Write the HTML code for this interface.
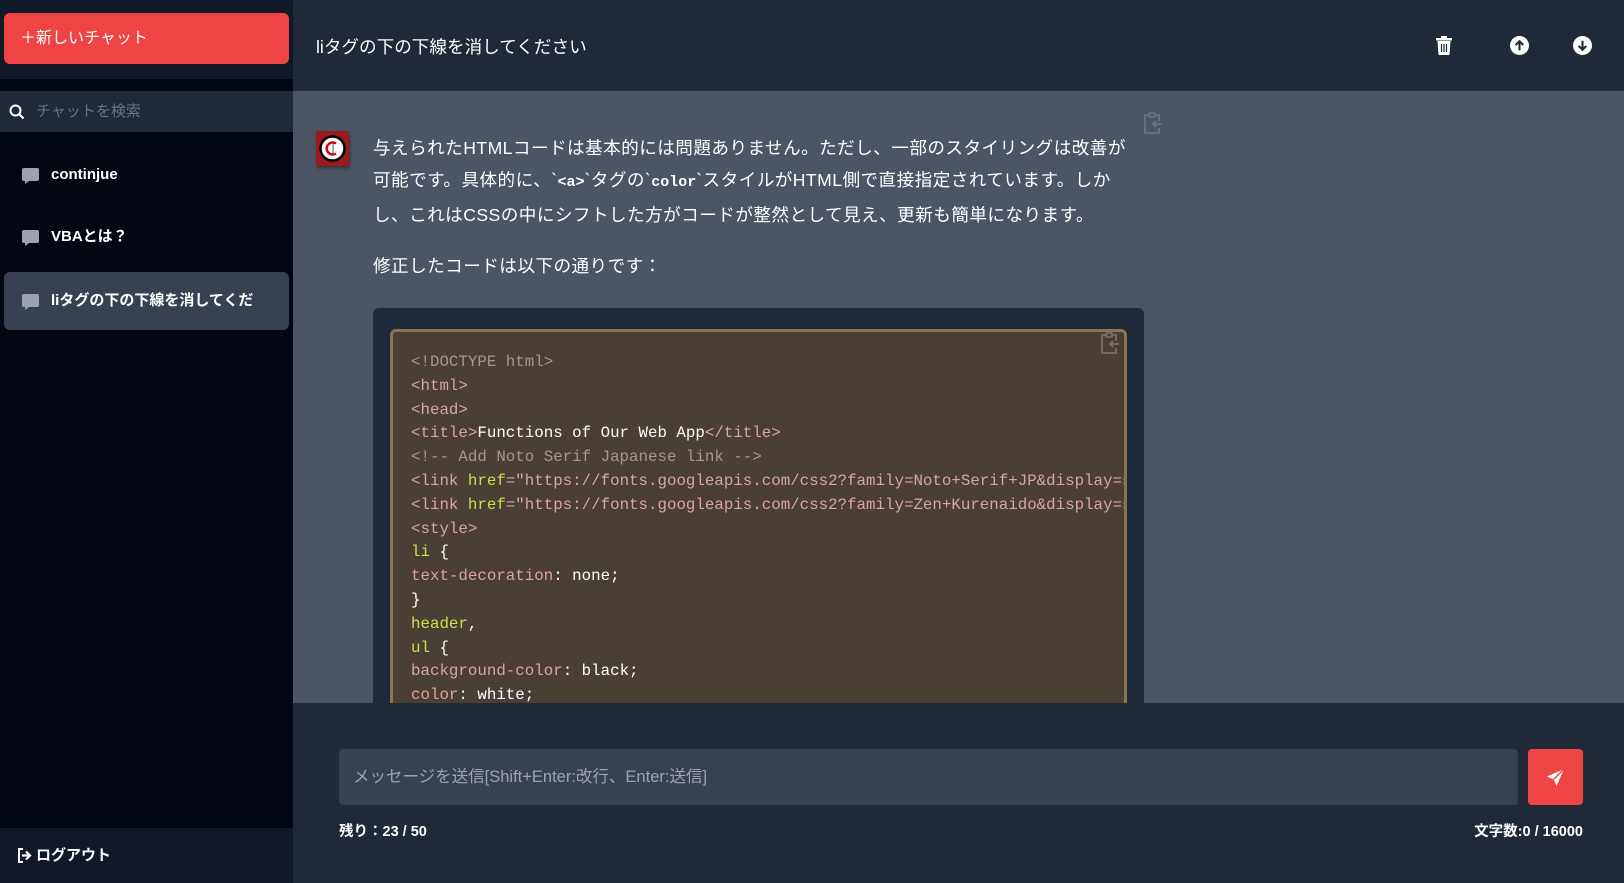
<!DOCTYPE html>
<html><head><meta charset="utf-8"><style>
*{margin:0;padding:0;box-sizing:border-box}
body{width:1624px;height:883px;overflow:hidden;font-family:"Liberation Sans","Noto Sans CJK JP",sans-serif;background:#4b5563;position:relative;color:#fff}
.sb{position:absolute;left:0;top:0;width:293px;height:883px;background:#030712}
.sbtop{position:absolute;left:0;top:0;width:293px;height:79px;background:#111827}
.btn{position:absolute;left:4px;top:13px;width:285px;height:51px;background:#ef4444;border-radius:6px;font-size:16px;line-height:51px;padding-left:16px;color:#fff}
.search{position:absolute;left:0;top:91px;width:293px;height:41px;background:#1f2937;color:#6b7280;font-size:15px;line-height:41px;padding-left:36px}
.item{position:absolute;left:4px;width:285px;height:58px;border-radius:6px;font-size:15px;line-height:58px;padding-left:47px;color:#fff;font-weight:bold}
.item svg{position:absolute;left:18px;top:22px}
.logout{position:absolute;left:0;top:828px;width:293px;height:55px;background:#111827;font-size:15px;line-height:55px;padding-left:36px;font-weight:bold}
.hdr{position:absolute;left:293px;top:0;width:1331px;height:91px;background:#1f2937}
.title{position:absolute;left:23px;top:34px;font-size:17.6px}
.msg{position:absolute;left:373px;top:132px;width:800px;font-size:17.6px;line-height:32px;color:#fff;white-space:nowrap;letter-spacing:0.45px}
.code1{position:absolute;left:373px;top:308px;width:771px;height:420px;background:#1f2937;border-radius:6px}
.code2{position:absolute;left:390px;top:329px;width:737px;height:420px;background:#4a3f35;border:3px solid #8b7355;border-radius:6px;overflow:hidden}
pre{font-family:"Liberation Mono",monospace;font-size:15.8px;line-height:23.8px;color:#fff;padding:19px 0 0 18px;white-space:pre}
.t{color:#dca3a8}.a{color:#c6e24a}.c{color:#a8978a}.s{color:#dca3a8}
.bot{position:absolute;left:293px;top:703px;width:1331px;height:180px;background:#1f2937}
.inp{position:absolute;left:339px;top:749px;width:1179px;height:56px;background:#374151;border-radius:4px;color:#9ca3af;font-size:16.5px;line-height:56px;padding-left:14px}
.send{position:absolute;left:1528px;top:749px;width:55px;height:56px;background:#ef4444;border-radius:4px}
.small{position:absolute;top:820px;font-size:14.5px;font-weight:bold}
</style></head><body>
<div class="sb">
<div class="sbtop"><div class="btn">＋新しいチャット</div></div>
<div class="search"><svg style="position:absolute;left:9px;top:13px" width="16" height="16" viewBox="0 0 16 16"><circle cx="6.5" cy="6.5" r="5" fill="none" stroke="#fff" stroke-width="2"/><path d="M10 10l4.5 4.5" stroke="#fff" stroke-width="2.2"/></svg>チャットを検索</div>
<div class="item" style="top:146px"><svg width="17" height="16" viewBox="0 0 17 16"><path d="M2 0h13a2 2 0 0 1 2 2v9a2 2 0 0 1-2 2H7l-4 3v-3H2a2 2 0 0 1-2-2V2a2 2 0 0 1 2-2z" fill="#9ca3af"/></svg>continjue</div>
<div class="item" style="top:208px"><svg width="17" height="16" viewBox="0 0 17 16"><path d="M2 0h13a2 2 0 0 1 2 2v9a2 2 0 0 1-2 2H7l-4 3v-3H2a2 2 0 0 1-2-2V2a2 2 0 0 1 2-2z" fill="#9ca3af"/></svg>VBAとは？</div>
<div class="item" style="top:272px;background:#374151"><svg width="17" height="16" viewBox="0 0 17 16"><path d="M2 0h13a2 2 0 0 1 2 2v9a2 2 0 0 1-2 2H7l-4 3v-3H2a2 2 0 0 1-2-2V2a2 2 0 0 1 2-2z" fill="#9ca3af"/></svg>liタグの下の下線を消してくだ</div>
<div class="logout"><svg style="position:absolute;left:17px;top:20px" width="16" height="15" viewBox="0 0 16 15"><path d="M6 1H2v13h4" fill="none" stroke="#fff" stroke-width="2"/><path d="M5 7.5h7M9 3.5l4 4-4 4" fill="none" stroke="#fff" stroke-width="2.2"/></svg>ログアウト</div>
</div>
<div class="hdr"><div class="title">liタグの下の下線を消してください</div>
<svg style="position:absolute;left:1143px;top:36px" width="16" height="19" viewBox="0 0 16 19"><rect x="0" y="2" width="16" height="2.5" fill="#fff"/><rect x="5" y="0" width="6" height="3" fill="#fff"/><path d="M1.5 5h13l-1 14h-11z" fill="#fff"/><path d="M5.5 8v8M8 8v8M10.5 8v8" stroke="#1f2937" stroke-width="1.2"/></svg>
<svg style="position:absolute;left:1217px;top:36px" width="19" height="19" viewBox="0 0 20 20"><circle cx="10" cy="10" r="10" fill="#fff"/><path d="M10 15V6M6 9.5l4-4 4 4" fill="none" stroke="#1f2937" stroke-width="2.2"/></svg>
<svg style="position:absolute;left:1280px;top:36px" width="19" height="19" viewBox="0 0 20 20"><circle cx="10" cy="10" r="10" fill="#fff"/><path d="M10 5v9M6 10.5l4 4 4-4" fill="none" stroke="#1f2937" stroke-width="2.2"/></svg>
</div>
<div style="position:absolute;left:316px;top:131px;width:33px;height:35px;background:#991b1b;box-shadow:1px 2px 3px rgba(0,0,0,.4)"><svg width="33" height="35" viewBox="0 0 33 35"><circle cx="16.5" cy="17.5" r="12" fill="#fff" stroke="#000" stroke-width="2.5"/><path d="M20 12.5a6 6 0 1 0 0 10" fill="none" stroke="#d00" stroke-width="2.5"/><path d="M17 10v15" stroke="#555" stroke-width="1"/></svg></div>
<svg style="position:absolute;left:1143px;top:112px" width="20" height="22" viewBox="0 0 20 22" fill="none" stroke="#6b7280" stroke-width="1.8"><path d="M6 3H2v18h14v-5M16 9V3h-4"/><rect x="6" y="1" width="6" height="4" rx="1"/><path d="M19 12h-9M13 9l-3 3 3 3"/></svg>
<div class="msg">与えられたHTMLコードは基本的には問題ありません。ただし、一部のスタイリングは改善が<br>可能です。具体的に、`<b style="font-family:'Liberation Mono',monospace;font-size:15px;letter-spacing:0">&lt;a&gt;</b>`タグの`<b style="font-family:'Liberation Mono',monospace;font-size:15px;letter-spacing:0">color</b>`スタイルがHTML側で直接指定されています。しか<br>し、これはCSSの中にシフトした方がコードが整然として見え、更新も簡単になります。<div style="margin-top:19px">修正したコードは以下の通りです：</div></div>
<div class="code1"></div>
<div class="code2">
<svg style="position:absolute;right:4px;top:0px" width="20" height="22" viewBox="0 0 20 22" fill="none" stroke="#7a7068" stroke-width="1.8"><path d="M6 3H2v18h14v-5M16 9V3h-4"/><rect x="6" y="1" width="6" height="4" rx="1"/><path d="M19 12h-9M13 9l-3 3 3 3"/></svg>
<pre><span class="c">&lt;!DOCTYPE html&gt;</span>
<span class="t">&lt;html&gt;</span>
<span class="t">&lt;head&gt;</span>
<span class="t">&lt;title&gt;</span>Functions of Our Web App<span class="t">&lt;/title&gt;</span>
<span class="c">&lt;!-- Add Noto Serif Japanese link --&gt;</span>
<span class="t">&lt;link </span><span class="a">href</span><span class="t">="https://fonts.googleapis.com/css2?family=Noto+Serif+JP&amp;display=swap"</span>
<span class="t">&lt;link </span><span class="a">href</span><span class="t">="https://fonts.googleapis.com/css2?family=Zen+Kurenaido&amp;display=swap"</span>
<span class="t">&lt;style&gt;</span>
<span class="a">li</span> {
<span class="t">text-decoration</span>: none;
}
<span class="a">header</span>,
<span class="a">ul</span> {
<span class="t">background-color</span>: black;
<span class="t">color</span>: white;</pre>
</div>
<div class="bot"></div>
<div class="inp">メッセージを送信[Shift+Enter:改行、Enter:送信]</div>
<div class="send"><svg style="position:absolute;left:18px;top:19px" width="19" height="19" viewBox="0 0 20 20"><path d="M19 1L1 9l7 3 3 7z" fill="#fff"/><path d="M19 1L8 12" stroke="#ef4444" stroke-width="1.5"/></svg></div>
<div class="small" style="left:339px">残り：23 / 50</div>
<div class="small" style="right:41px">文字数:0 / 16000</div>
</body></html>
